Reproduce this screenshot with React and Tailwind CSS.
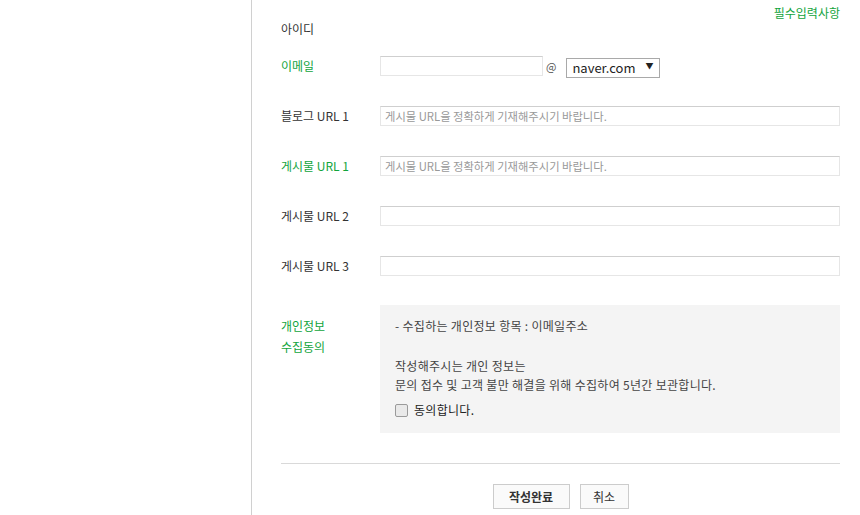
import React, { useState } from "react";

const font = { fontFamily: '"Noto Sans CJK KR", "Noto Sans", sans-serif' };

const inputCls =
  "h-[20px] border border-[#e6e6e6] border-t-[#cfcfcf] px-[4px] text-[11.3px] text-[#333] placeholder:text-[#999] outline-none bg-white";

function Row({ label, green, children }) {
  return (
    <div className="flex items-center h-[20px]">
      <div
        className={
          "w-[99px] shrink-0 text-[12px] " +
          (green ? "text-[#11a43c]" : "text-[#333]")
        }
      >
        {label}
      </div>
      <div className="flex-1 flex items-center">{children}</div>
    </div>
  );
}

export default function App() {
  const [agree, setAgree] = useState(false);
  const [domain, setDomain] = useState("naver.com");

  return (
    <div className="flex h-[515px] overflow-hidden bg-white" style={font}>
      <div className="w-[252px] shrink-0 border-r border-[#d0d0d0]" />

      <div className="flex-1 pl-[29px] pr-[20px]">
        {/* required notice */}
        <div className="flex justify-end pt-[5px] h-[21px] leading-[16px] text-[12px] text-[#11a43c]">
          필수입력사항
        </div>

        <div className="mt-[-2px]">
          <Row label="아이디" />
        </div>

        {/* email */}
        <div className="mt-[17px]">
          <Row label="이메일" green>
            <input className={inputCls + " w-[163px]"} />
            <span className="ml-[3px] mr-[10px] text-[11px] text-[#555]">@</span>
            <div className="relative">
              <select
                value={domain}
                onChange={(e) => setDomain(e.target.value)}
                className="appearance-none h-[20px] w-[94px] border border-[#a9a9a9] bg-white pl-[5px] text-[13px] text-[#222] leading-[18px] outline-none"
                style={font}
              >
                <option>naver.com</option>
                <option>gmail.com</option>
                <option>daum.net</option>
              </select>
              <span className="pointer-events-none absolute right-[7px] top-1/2 -translate-y-1/2 text-[8px] leading-none text-[#222]">
                ▼
              </span>
            </div>
          </Row>
        </div>

        <div className="mt-[30px]">
          <Row label="블로그 URL 1">
            <input
              className={inputCls + " w-full"}
              placeholder="게시물 URL을 정확하게 기재해주시기 바랍니다."
              style={font}
            />
          </Row>
        </div>

        <div className="mt-[30px]">
          <Row label="게시물 URL 1" green>
            <input
              className={inputCls + " w-full"}
              placeholder="게시물 URL을 정확하게 기재해주시기 바랍니다."
              style={font}
            />
          </Row>
        </div>

        <div className="mt-[30px]">
          <Row label="게시물 URL 2">
            <input className={inputCls + " w-full"} />
          </Row>
        </div>

        <div className="mt-[30px]">
          <Row label="게시물 URL 3">
            <input className={inputCls + " w-full"} />
          </Row>
        </div>

        {/* privacy agreement */}
        <div className="flex mt-[29px]">
          <div className="w-[99px] shrink-0 pt-[10px] text-[12px] leading-[21px] text-[#11a43c]">
            개인정보
            <br />
            수집동의
          </div>
          <div className="flex-1 h-[128px] bg-[#f4f4f4] pl-[15px] pt-[11px] text-[12px] tracking-[0.3px] text-[#444]">
            <p className="leading-[20px]">- 수집하는 개인정보 항목 : 이메일주소</p>
            <p className="mt-[20px] leading-[19px]">작성해주시는 개인 정보는</p>
            <p className="leading-[19px]">
              문의 접수 및 고객 불만 해결을 위해 수집하여 5년간 보관합니다.
            </p>
            <label className="mt-[6px] flex items-center h-[20px] text-[#222]">
              <input
                type="checkbox"
                checked={agree}
                onChange={(e) => setAgree(e.target.checked)}
                className="appearance-none w-[13px] h-[13px] rounded-[2px] border border-[#9a9a9a] bg-[#e9e9e9] checked:bg-[#11a43c]"
              />
              <span className="ml-[6px]">동의합니다.</span>
            </label>
          </div>
        </div>

        <div className="mt-[30px] border-t border-[#d9d9d9]" />

        <div className="mt-[20px] flex justify-center gap-[10px]">
          <button className="h-[25px] w-[77px] border border-[#cccccc] bg-[#fafafa] text-[12px] font-bold text-[#333]">
            작성완료
          </button>
          <button className="h-[25px] w-[49px] border border-[#cccccc] bg-[#fafafa] text-[12px] text-[#333]">
            취소
          </button>
        </div>
      </div>
    </div>
  );
}
